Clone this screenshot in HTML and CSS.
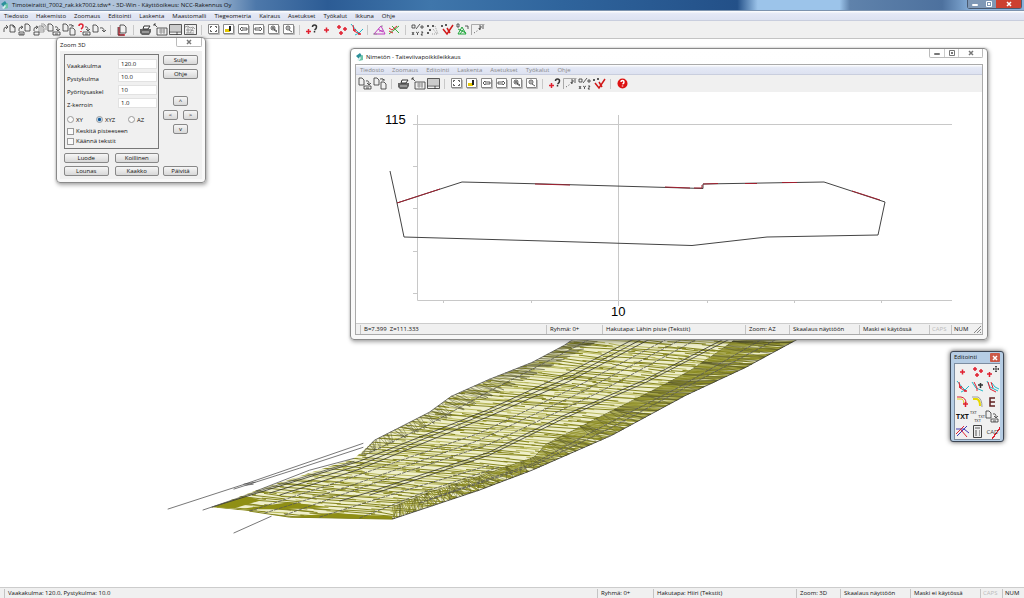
FILE: index.html
```
<!DOCTYPE html>
<html lang="fi">
<head>
    <meta charset="UTF-8">
    <meta name="viewport" content="width=device-width, initial-scale=1.0">
    <title>3D-Win</title>
    <link rel="stylesheet" href="styles.css">
</head>
<body>

    <!-- Icon library -->
    <svg class="icon-library" aria-hidden="true">
        <symbol id="i-open" viewBox="0 0 15 13"><path class="k" d="M2 9V6q0-2 3-2M4 2l2 2-2 2M8 2h3l2 2v5H8zM11 2v2h2"/></symbol>
        <symbol id="i-open-disk" viewBox="0 0 15 13"><path class="k" d="M2 8V6q0-2 3-2M4 3l2 1-2 2M8 1h3l2 2v5H8zM2 9h5v3H2z"/><path class="k" d="M3 11h3"/></symbol>
        <symbol id="i-open-many" viewBox="0 0 15 13"><path class="g" d="M7 3h3l2 2v4H7zM9 1h3l2 2v4M8 5h3M8 7h4M9 3h4"/><path class="k" d="M2 8V6q0-2 3-2M4 3l2 1-2 2M2 9h5v3H2z"/></symbol>
        <symbol id="i-save" viewBox="0 0 15 13"><path class="k" d="M1 1h3l2 2v5H1zM8 4q3-1 3 3M9 6l2 2 2-2"/><path class="k" d="M6 9h7v3H6zM8 11h3"/></symbol>
        <symbol id="i-save-as" viewBox="0 0 15 13"><path class="k" d="M1 1h3l2 2v5H1zM8 5h3l2 2v5H8zM7 2q3-1 4 1"/><path class="k" d="M9 3h3"/></symbol>
        <symbol id="i-ask-save" viewBox="0 0 15 13"><path class="r b" d="M2 3q0-2 2-2t2 2-2 3M4 8v1"/><path class="k" d="M8 4q3-1 3 3M9 6l2 2 2-2M6 9h7v3H6zM8 11h3"/></symbol>
        <symbol id="i-close" viewBox="0 0 15 13"><path class="k" d="M1 2h3l2 2v5H1zM8 5q4-1 4 3M10 7l2 2 2-2"/></symbol>
        <symbol id="i-book" viewBox="0 0 15 13"><path class="r b" d="M4 4v8h6"/><path class="k" d="M5 2h4l2 2v6H5zM3 4v8h6"/></symbol>
        <symbol id="i-print" viewBox="0 0 15 13"><path fill="#666" d="M2 6h11v3l-2 3H4l-2-2z"/><path fill="#fff" stroke="#333" d="M5 6l1-3h6l-2 3z"/><path stroke="#ccc" d="M4 9h7"/></symbol>
        <symbol id="i-export" viewBox="0 0 15 13"><path class="k" d="M1 1l3 3M1 3V1h2M4 5h10v7H4z"/><path class="g" d="M6 7h6M6 9h6M8 5v6M11 5v6"/></symbol>
        <symbol id="i-panel" viewBox="0 0 15 13"><path fill="#ccc" d="M2 2h11v6H2z"/><path class="k" d="M1.500 1.500h12v10h-12zM1 9h12M9 9v3"/></symbol>
        <symbol id="i-list" viewBox="0 0 15 13"><path class="k" d="M1.500 1.500h12v10h-12z"/><path class="g" d="M2 4l3-1 2 2 3-1 2 2M3 7h5l3 1M3 10h8M5 4v6M10 5l-3 5"/></symbol>
        <symbol id="i-frame" viewBox="0 0 15 13"><path fill="#fff" stroke="#888" d="M2.500 1.500h10v9h-10z"/><path stroke="#bbb" d="M3 11.500h10.500V3"/></symbol>
        <symbol id="i-fit" viewBox="0 0 15 13"><use href="#i-frame"/><path class="k" d="M4.500 5V3.500H6M9 3.500h1.500V5M4.500 7v1.500H6M9 8.500h1.500V7"/></symbol>
        <symbol id="i-paint" viewBox="0 0 15 13"><use href="#i-frame"/><path fill="#e5c800" d="M4 6h5v3H4z"/><path fill="#222" d="M8 3h2v5H8z"/></symbol>
        <symbol id="i-left" viewBox="0 0 15 13"><use href="#i-frame"/><path class="k" d="M4 6l2-2v1h5v2H6v1z"/></symbol>
        <symbol id="i-right" viewBox="0 0 15 13"><use href="#i-frame"/><path class="k" d="M11 6L9 4v1H4v2h5v1z"/></symbol>
        <symbol id="i-in" viewBox="0 0 15 13"><use href="#i-frame"/><circle cx="7" cy="5" r="2" class="k"/><path class="k" d="M8 7l3 2M8 6l3 2M6 5h2M7 4v2"/></symbol>
        <symbol id="i-out" viewBox="0 0 15 13"><use href="#i-frame"/><circle cx="7" cy="5" r="2" class="k"/><path class="k" d="M8 7l3 2M6 5h2"/></symbol>
        <symbol id="i-point-ask" viewBox="0 0 15 13"><path class="r b" d="M2 8.500h5M4.500 6v5"/><path class="k b" d="M8.500 4q0-2 2-2t2 2-2 3M10.500 8v1.500"/></symbol>
        <symbol id="i-point" viewBox="0 0 15 13"><path class="r b" d="M5 7h5M7.500 4.500v5"/></symbol>
        <symbol id="i-points" viewBox="0 0 15 13"><path class="r b" d="M3 4h4M5 2v4M9 6h4M11 4v4M5 10h4M7 8v4"/></symbol>
        <symbol id="i-line" viewBox="0 0 15 13"><path stroke="#22b8c8" d="M2 1l5 6 3 3 4-4M6 12l4-2"/><path class="r" d="M4 2l1 6 6 3"/><path class="r b" d="M4 7h3M9 11h3"/></symbol>
        <symbol id="i-angle" viewBox="0 0 15 13"><path stroke="#c03cc0" d="M2 11l7-8 4 8zM7 8h4M6 6l5 3"/><path class="g" d="M1 11h4M9 3h2"/></symbol>
        <symbol id="i-cross" viewBox="0 0 15 13"><path stroke="#3ab03a" d="M2 11l10-8M5 3l7 7"/><path class="r" d="M2 5l3 2 5-4M2 8l4 2"/></symbol>
        <symbol id="i-xyz" viewBox="0 0 15 13"><path class="k" d="M2 2h3v3H2zM6 6l4-5M10 4h4M12 2v4M2 9l2 3M4 9l-2 3M6 9l1.500 1L9 9M7.500 10v2M11 9h2l-2 3h2"/></symbol>
        <symbol id="i-marks" viewBox="0 0 15 13"><path class="k" d="M2 2l2 2M4 2L2 4M7 2l2 2M9 2L7 4M4 6l2 2M6 6L4 8M2 9l2 2M4 9l-2 2"/><path class="g" stroke-dasharray="1 1" d="M10 3l3 8M8 6l4 5M7 11h6"/></symbol>
        <symbol id="i-check" viewBox="0 0 15 13"><path class="k" d="M1 2l2 2M3 2L1 4M5 1l2 2M7 1L5 3"/><path stroke="#d01818" stroke-width="1.500" d="M3 6l4 5 6-9M7 5l3 5"/></symbol>
        <symbol id="i-hash" viewBox="0 0 15 13"><path class="k" d="M2 1h2v3H2zM10 3h3v3"/><path stroke="#20a83c" d="M3 11l4-7 4 7zM3 6l8 4M5 11l3-4"/></symbol>
        <symbol id="i-scale" viewBox="0 0 15 13"><path stroke="#aaa" d="M1.500 12V1.500h13"/><path class="k" stroke-dasharray="1 2" d="M4 10l6-4"/><path class="k" d="M9 3h2v2H9v1h2M13 2v4"/></symbol>
        <symbol id="i-help" viewBox="0 0 15 13"><circle cx="7.500" cy="6.500" r="5" fill="#dd1111"/><path stroke="#fff" stroke-width="1.500" d="M6 5q0-1.500 1.500-1.500T9 5 7.500 7M7.500 8.500v1"/></symbol>
        <symbol id="i-move" viewBox="0 0 15 13"><path class="r b" d="M2 9h5M4.500 7v5"/><path class="k" d="M8 4h6M11 1v6M10 2l1-1 1 1M10 6l1 1 1-1M9 3L8 4l1 1M13 3l1 1-1 1"/></symbol>
        <symbol id="i-line-move" viewBox="0 0 15 13"><path stroke="#22b8c8" d="M2 2l4 6 7 3"/><path class="r" d="M4 2l3 6v3"/><path class="k b" d="M8 5h5M10.500 3v5"/></symbol>
        <symbol id="i-line-copy" viewBox="0 0 15 13"><path stroke="#22b8c8" d="M2 1l3 6 8 4M7 3l3 4 4 2"/><path class="r" d="M3 2l2 7 6 3M6 2l2 6"/></symbol>
        <symbol id="i-arc-red" viewBox="0 0 15 13"><path stroke="#e0d020" d="M2 4h5q2 1 2 5"/><path class="r" d="M2 2h4q5 1 5 6"/><path class="r b" d="M8 9h5M10.500 7v5"/></symbol>
        <symbol id="i-arc-yellow" viewBox="0 0 15 13"><path stroke="#e8d800" stroke-width="2" d="M3 4h4q3 1 3 7"/><path class="g" d="M2 2h6q4 2 4 10"/></symbol>
        <symbol id="i-e" viewBox="0 0 15 13"><path stroke="#602020" stroke-width="1.500" d="M10 3H5v8h5M5 7h5"/></symbol>
        <symbol id="i-slice" viewBox="0 0 15 13"><path stroke="#4038b0" d="M1 4h8l5 4M2 11L12 1"/><path class="r" d="M1 9L9 1M6 5l6 7"/></symbol>
        <symbol id="i-calc" viewBox="0 0 15 13"><path stroke="#444" fill="#eee" d="M3.500 .500h8v12h-8z"/><path class="k" d="M5 3h5M5 6h2M9 6h1M5 8h2M9 8h1M5 10h2M9 10h1"/></symbol>
        <symbol id="i-app" viewBox="0 0 10 10"><path fill="#2b8f9a" d="M1 4l4-3 2 3-3 3z"/><path fill="#6dc5a8" d="M4 5l4-2v5l-4 1z"/><path fill="#d8eef0" d="M2 8l3-3 1 1-2 3z"/></symbol>
        <symbol id="i-x" viewBox="0 0 10 8"><path stroke="currentColor" stroke-width="1.500" d="M3 2l4 4M7 2L3 6"/></symbol>
        <symbol id="i-min" viewBox="0 0 10 8"><path stroke="currentColor" d="M2.500 4.500h5v1h-5z"/></symbol>
        <symbol id="i-max" viewBox="0 0 10 8"><path stroke="currentColor" d="M2.500 1.500h5v5h-5zM4 3.500h2M4 4.500h2"/></symbol>
    </svg>

    <header class="main-title">
        <svg class="app-icon"><use href="#i-app"/></svg>
        <span class="title-text">Timoteiraitti_7002_rak.kk7002.tdw* - 3D-Win - Käyttöoikeus: NCC-Rakennus Oy</span>
        <div class="main-controls">
            <button aria-label="Pienennä"><svg><use href="#i-min"/></svg></button>
            <button aria-label="Suurenna"><svg><use href="#i-max"/></svg></button>
            <button class="red" aria-label="Sulje"><svg><use href="#i-x"/></svg></button>
        </div>
    </header>

    <nav class="menu">
        <button>Tiedosto</button><button>Hakemisto</button><button>Zoomaus</button><button>Editointi</button><button>Laskenta</button><button>Maastomalli</button><button>Tiegeometria</button><button>Kairaus</button><button>Asetukset</button><button>Työkalut</button><button>Ikkuna</button><button>Ohje</button>
    </nav>

    <div class="toolbar" data-icons="open open-disk open-many save save-as ask-save close | book | print export panel list | fit paint left right in out | point-ask point points line | angle cross | xyz marks check hash scale"></div>

    <main class="workspace">
        <svg id="mesh" viewBox="0 38 1024 549" preserveAspectRatio="xMinYMin meet"></svg>
    </main>

    <footer class="status">
        <span class="cell grow">Vaakakulma: 120.0, Pystykulma: 10.0</span>
        <span class="cell group">Ryhmä: 0+</span>
        <span class="cell search">Hakutapa: Hiiri (Tekstit)</span>
        <span class="cell zoom">Zoom: 3D</span>
        <span class="cell scale">Skaalaus näyttöön</span>
        <span class="cell scale">Maski ei käytössä</span>
        <span class="cell key off">CAPS</span>
        <span class="cell key">NUM</span>
    </footer>

    <!-- Zoom 3D -->
    <section class="window zoom-dialog">
        <div class="window-title">
            <span class="title-text">Zoom 3D</span>
            <div class="controls"><button class="wide" aria-label="Sulje ikkuna"><svg><use href="#i-x"/></svg></button></div>
        </div>
        <form class="dialog-body">
            <div class="fields">
                <div class="field"><label for="vaaka">Vaakakulma</label><input type="text" id="vaaka" value="120.0"></div>
                <div class="field"><label for="pysty">Pystykulma</label><input type="text" id="pysty" value="10.0"></div>
                <div class="field"><label for="askel">Pyöritysaskel</label><input type="text" id="askel" value="10"></div>
                <div class="field"><label for="kerroin">Z-kerroin</label><input type="text" id="kerroin" value="1.0"></div>
                <div class="radios">
                    <label><input type="radio" name="taso">XY</label>
                    <label><input type="radio" name="taso" checked>XYZ</label>
                    <label><input type="radio" name="taso">AZ</label>
                </div>
                <label class="tick"><input type="checkbox">Keskitä pisteeseen</label>
                <label class="tick"><input type="checkbox">Käännä tekstit</label>
            </div>
            <div class="side">
                <button type="button">Sulje</button>
                <button type="button">Ohje</button>
                <div class="arrows">
                    <button type="button" class="up">^</button>
                    <button type="button" class="back">&lt;</button>
                    <button type="button" class="next">&gt;</button>
                    <button type="button" class="down">v</button>
                </div>
            </div>
            <div class="directions">
                <button type="button">Luode</button>
                <button type="button">Koillinen</button>
                <button type="button">Lounas</button>
                <button type="button">Kaakko</button>
            </div>
            <button type="button" class="update">Päivitä</button>
        </form>
    </section>

    <!-- Cross-section window -->
    <section class="window section-window">
        <div class="window-title">
            <svg class="app-icon"><use href="#i-app"/></svg>
            <span class="title-text">Nimetön - Taiteviivapoikkileikkaus</span>
            <div class="controls">
                <button aria-label="Pienennä"><svg><use href="#i-min"/></svg></button>
                <button aria-label="Suurenna"><svg><use href="#i-max"/></svg></button>
                <button class="wide" aria-label="Sulje ikkuna"><svg><use href="#i-x"/></svg></button>
            </div>
        </div>
        <div class="client">
            <nav class="menu inactive">
                <button>Tiedosto</button><button>Zoomaus</button><button>Editointi</button><button>Laskenta</button><button>Asetukset</button><button>Työkalut</button><button>Ohje</button>
            </nav>
            <div class="toolbar" data-icons="save save-as | print export panel | fit paint left right in out | point-ask scale xyz check | help"></div>
            <svg class="plot" viewBox="356 92 626 231">
                <path class="axis" d="M417.500 115V300.500H952M413 124.500H952M618.500 115V306M413 166.500h5M413 208.500h5M413 251.500h5M413 293.500h5M443.500 301v2M531.500 301v2M707.500 301v2M794.500 301v2M881.500 301v2"/>
                <path class="profile" d="M390 171L397 203L404 237L545 241L692 245.500L767 237L878 235L885 202L824 182L703 184V188.500L545 184L462 182L397 203"/>
                <path class="profile-red" d="M397 203L440 189M535 184l35 1M665 187l25 1M702 185v3l-8 0M703 184l15-.500M745 183.500l12 0M782 182.500l15 0M852 191l28 9"/>
                <text x="385" y="124">115</text>
                <text x="611" y="316">10</text>
            </svg>
            <div class="status">
                <span class="cell grow">B=7.399&nbsp; Z=111.333</span>
                <span class="cell group">Ryhmä: 0+</span>
                <span class="cell search">Hakutapa: Lähin piste (Tekstit)</span>
                <span class="cell zoom">Zoom: AZ</span>
                <span class="cell scale">Skaalaus näyttöön</span>
                <span class="cell scale">Maski ei käytössä</span>
                <span class="cell key off">CAPS</span>
                <span class="cell key">NUM</span>
                <svg class="grip" viewBox="0 0 9 10"><path d="M1 9l7-7M4 9l4-4M7 9l1-1" stroke="#888"/></svg>
            </div>
        </div>
    </section>

    <!-- Editing palette -->
    <section class="palette">
        <div class="palette-title">
            <span>Editointi</span>
            <button aria-label="Sulje paletti"><svg><use href="#i-x"/></svg></button>
        </div>
        <div class="palette-tools">
            <button aria-label="Piste"><svg><use href="#i-point"/></svg></button>
            <button aria-label="Pisteet"><svg><use href="#i-points"/></svg></button>
            <button aria-label="Siirrä"><svg><use href="#i-move"/></svg></button>
            <button aria-label="Viiva"><svg><use href="#i-line"/></svg></button>
            <button aria-label="Siirrä viiva"><svg><use href="#i-line-move"/></svg></button>
            <button aria-label="Kopioi viiva"><svg><use href="#i-line-copy"/></svg></button>
            <button aria-label="Kaari"><svg><use href="#i-arc-red"/></svg></button>
            <button aria-label="Pyöristys"><svg><use href="#i-arc-yellow"/></svg></button>
            <button aria-label="Ominaisuudet"><svg><use href="#i-e"/></svg></button>
            <button class="txt">TXT</button>
            <button class="txt-multi"><span>TXT</span><span>TXT</span><span>TXT</span></button>
            <button aria-label="Tallenna"><svg><use href="#i-save"/></svg></button>
            <button aria-label="Leikkaa"><svg><use href="#i-slice"/></svg></button>
            <button aria-label="Laskin"><svg><use href="#i-calc"/></svg></button>
            <button class="cad">CAD</button>
        </div>
    </section>

    <script src="script.js"></script>
</body>
</html>
```
FILE: styles.css
```
* {
    box-sizing: border-box;
}

body {
    margin: 0;
    min-height: 100vh;
    display: flex;
    flex-direction: column;
    position: relative;
    overflow: hidden;
    background-color: #fff;
    color: #111;
    font-family: "Open Sans", "Noto Sans", sans-serif;
    font-size: 6px;
    line-height: 8px;
}

button, input {
    margin: 0;
    padding: 0;
    border: 0;
    background: none;
    color: inherit;
    font: inherit;
}

button svg {
    display: block;
}

.icon-library {
    position: absolute;
    width: 0;
    height: 0;
}

/* Icon strokes */
symbol path:not([fill]) {
    fill: none;
}

.k { stroke: #333; stroke-width: 0.8; fill: none; }
.g { stroke: #888; stroke-width: 0.8; }
.r { stroke: #e02030; }
.b { stroke-width: 1.5; }

.app-icon {
    width: 10px;
    height: 10px;
    flex: none;
}

/* Main title bar */
.main-title {
    height: 11px;
    display: flex;
    align-items: center;
    gap: 2px;
    background: linear-gradient(90deg, #9db9d6 0, #b2c4da 10%, #9db5d0 21%, #4d78aa 25%, #2c5c95 32%, #3f76ab 42%, #2f649c 55%, #235088 72%, #9cc4ea 74%, #9cc4ea 82%, #5f82ab 83%, #4d719e 92%, #8ab2dc 95%);
    border-bottom: 1px solid #7d93ae;
}

.main-controls {
    display: flex;
    align-self: flex-start;
    margin-left: auto;
    margin-right: 2px;
    color: #fff;
    border: 1px solid #4a5a70;
    border-top: 0;
    border-radius: 0 0 3px 3px;
}

.main-controls button {
    width: 14px;
    height: 8px;
    background-color: #7f98b6;
}

.main-controls button.red {
    width: 25px;
    background-color: #cc4030;
}

.main-controls svg, .controls svg {
    width: 10px;
    height: 8px;
    margin: 0 auto;
}

/* Menus and toolbars */
.menu {
    height: 10px;
    display: flex;
    background: linear-gradient(#fff, #e4e8f5 30%, #dde2f1);
    border-bottom: 1px solid #c9cede;
}

.menu button {
    padding: 0 4px;
}

.menu.inactive {
    color: #888;
}

.toolbar {
    height: 17px;
    display: flex;
    align-items: center;
    padding-left: 2px;
    background-color: #f0f0f0;
}

.toolbar button, .toolbar button svg {
    width: 15px;
    height: 13px;
}

.toolbar .sep {
    width: 1px;
    height: 10px;
    margin: 0 4px 0 3px;
    background-color: #c8c8c8;
}

.workspace {
    flex: 1;
    display: flex;
    border-top: 1px solid #c4c4c4;
}

#mesh {
    flex: 1;
    min-width: 0;
    height: 548px;
}

/* Status bars */
.status {
    height: 11px;
    display: flex;
    background-color: #f0f0f0;
    border-top: 1px solid #ccc;
    white-space: nowrap;
}

.cell {
    flex: none;
    margin-top: 1px;
    padding-left: 3px;
    border-left: 1px solid #c4c4c4;
}

.cell.grow {
    flex: 1;
    min-width: 0;
    margin-left: 4px;
}

.cell.group { width: 56px; }
.cell.search { width: 143px; }
.cell.zoom { width: 44px; }
.cell.scale { width: 70px; }
.cell.key { width: 22px; padding-left: 2px; }
.cell.off { color: #bbb; }

.grip {
    width: 9px;
    height: 10px;
}

/* Floating windows */
.window {
    position: absolute;
    border: 1px solid #8a8a8a;
    border-radius: 4px;
    background: linear-gradient(#fff, #f8f8f8);
    box-shadow: 0 0 2px #aaa, 1px 2px 4px rgba(0, 0, 0, 0.35);
}

.window-title {
    display: flex;
    align-items: center;
    gap: 1px;
}

.controls {
    display: flex;
    align-self: flex-start;
    margin-left: auto;
    color: #777;
    border: 1px solid #bbb;
    border-top: 0;
    border-radius: 0 0 2px 2px;
}

.controls button {
    width: 14px;
    height: 8px;
}

.controls button + button {
    border-left: 1px solid #ccc;
}

.controls button.wide {
    width: 24px;
}

.section-window {
    left: 350px;
    top: 48px;
    width: 638px;
    padding: 0 4px 4px;
}

.section-window .window-title {
    height: 15px;
}

.client {
    border: 1px solid #aaa;
    background-color: #fff;
}

.section-window .menu {
    height: 10px;
}

.plot {
    display: block;
    width: 100%;
}

.plot path {
    fill: none;
}

.plot text {
    font: 13px "Liberation Sans", sans-serif;
}

.axis { stroke: #c8c8c8; }
.profile { stroke: #444; }
.profile-red { stroke: #a02030; }

/* Zoom 3D dialog */
.zoom-dialog {
    left: 56px;
    top: 37px;
    width: 150px;
    padding: 0 3px 3px;
}

.zoom-dialog .window-title {
    height: 13px;
}

.dialog-body {
    display: grid;
    grid-template-columns: 95px 35px;
    gap: 4px;
    padding: 3px 4px 3px;
    background-color: #f0f0f0;
}

.fields {
    height: 95px;
    padding: 4px 1px 0 2px;
    border: 1px solid #777;
}

.field {
    display: flex;
    align-items: center;
    justify-content: space-between;
    height: 10px;
    margin-bottom: 3px;
}

.field label {
    padding-top: 4px;
}

.field input {
    width: 39px;
    height: 10px;
    padding-left: 2px;
    background-color: #fff;
    border: 1px solid #e2e2e2;
}

.radios {
    display: grid;
    grid-template-columns: 29px 32px 1fr;
    height: 13px;
    align-items: center;
    margin-top: 5px;
}

.radios label, .tick {
    display: flex;
    align-items: center;
    gap: 2px;
}

.tick {
    height: 10px;
}

.radios input, .tick input {
    appearance: none;
    flex: none;
    width: 7px;
    height: 7px;
    border: 1px solid #999;
    background-color: #fafafa;
}

.radios input {
    border-radius: 50%;
}

.radios input:checked {
    background: radial-gradient(#155a96 35%, #cfe3f5 60%);
}

.side {
    display: flex;
    flex-direction: column;
    gap: 4px;
    padding-top: 1px;
}

.dialog-body button {
    height: 10px;
    line-height: 8px;
    border: 1px solid #888;
    border-radius: 2px;
    background: linear-gradient(#f6f6f6, #d8d8d8);
}

.arrows {
    display: grid;
    grid-template-columns: 15px 15px;
    gap: 4px 5px;
    margin-top: 13px;
}

.arrows .up, .arrows .down {
    grid-column: 1 / 3;
    justify-self: center;
    width: 15px;
}

.directions {
    display: grid;
    grid-template-columns: 1fr 1fr;
    gap: 3px 6px;
}

.update {
    align-self: end;
}

/* Editing palette */
.palette {
    position: absolute;
    left: 950px;
    top: 351px;
    width: 54px;
    padding: 1px 3px;
    border: 1px solid #3c4654;
    border-radius: 3px;
    background-color: #b6cde4;
    box-shadow: 0 0 5px rgba(0, 0, 0, 0.7);
}

.palette-title {
    display: flex;
    justify-content: space-between;
    height: 10px;
}

.palette-title button {
    width: 10px;
    height: 9px;
    color: #fff;
    border-radius: 1px;
    background-color: #cc5a48;
}

.palette-title svg {
    width: 10px;
    height: 8px;
}

.palette-tools {
    display: grid;
    grid-template-columns: repeat(3, 15px);
    grid-auto-rows: 15px;
    background-color: #f0f0f0;
    border: 1px solid #7d8da0;
    border-right: 0;
}

.palette-tools button {
    height: 15px;
}

.palette-tools svg {
    width: 15px;
    height: 13px;
}

.palette-tools .txt {
    font-size: 7px;
    font-weight: bold;
}

.txt-multi {
    display: grid;
    align-content: center;
    font-size: 4px;
    line-height: 4px;
}

.palette-tools .txt-multi {
    font-size: 4px;
    line-height: 4px;
}

.txt-multi span:nth-child(1) {
    text-align: left;
}

.txt-multi span:nth-child(2) {
    text-align: right;
}

.palette-tools .cad {
    font-size: 6px;
    color: #444;
    background: linear-gradient(125deg, transparent 66%, #e02030 66%, #e02030 72%, transparent 72%);
}

/* Terrain model */
.ground { fill: #efefcb; }
.hatch { fill: none; stroke: #85851c; }
.hatch-light { fill: none; stroke: #b9b95c; }
.slope { fill: none; stroke: #8c8c24; stroke-width: 0.7; }
.wire { fill: none; stroke: #4c4c2a; stroke-width: 0.7; opacity: 0.6; }
.near { fill: #8f8f14; }
.edge { fill: none; stroke: #333; stroke-width: 0.8; }
.dotted { fill: none; stroke: #555; stroke-width: 0.8; stroke-dasharray: 4 1; }
.outline { fill: none; stroke: #555; stroke-width: 0.8; }
```
FILE: script.js
```
// Toolbars
document.querySelectorAll('.toolbar').forEach(bar => {
    bar.innerHTML = bar.dataset.icons.split(' ').map(name =>
        name === '|'
            ? '<span class="sep"></span>'
            : `<button aria-label="${name}"><svg><use href="#i-${name}"/></svg></button>`
    ).join('');
});

// Break lines of the road model, nearest end first
const leftEdge = [[212, 507], [257, 490], [355, 458], [362, 452], [375, 440], [430, 412], [452, 396], [490, 379], [533, 362], [565, 345], [580, 335]];
const leftToe = [[358, 458], [410, 436], [490, 397], [560, 362], [610, 335]];
const leftTop = [[362, 454], [375, 440], [430, 412], [452, 396], [490, 379], [533, 362], [565, 345], [580, 335]];
const crest = [[393, 507], [427, 493], [480, 476], [535, 457], [547, 444], [600, 417], [660, 387], [690, 371], [720, 351], [742, 335]];
const toe = [[393, 519], [480, 490], [533, 470], [613, 435], [687, 395], [747, 367], [806, 335]];
const front = [[250, 511], [290, 517], [393, 519]];

let seed = 7;
function rnd() {
    seed = (seed * 16807) % 2147483647;
    return seed / 2147483647;
}

function at(line, t) {
    const lengths = line.slice(1).map((p, i) => Math.hypot(p[0] - line[i][0], p[1] - line[i][1]));
    let d = t * lengths.reduce((a, b) => a + b, 0);
    let i = 0;
    while (i < lengths.length - 1 && d > lengths[i]) {
        d -= lengths[i];
        i++;
    }
    const k = d / lengths[i];
    return [line[i][0] + (line[i + 1][0] - line[i][0]) * k, line[i][1] + (line[i + 1][1] - line[i][1]) * k];
}

function toPath(points) {
    return 'M' + points.map(p => p.map(n => n.toFixed(1)).join(' ')).join('L');
}

// Triangle strip between two break lines, with uneven spacing
function strip(a, b, count) {
    const points = [];
    for (let i = 0; i <= count; i++) {
        points.push(at(a, i / count), at(b, Math.min(1, (i + rnd() * 3) / count)));
    }
    return toPath(points);
}

// Cross-sections over the road surface, split into facets
let dark = '';
let light = '';
for (let y = 320; y < 550; y += 2.6) {
    let x = 200 + rnd() * 20;
    while (x < 810) {
        const length = 16 + rnd() * 34;
        const y0 = y + (x - 200) * 0.07 - 30 + rnd() * 2.4;
        const piece = `M${x.toFixed(1)} ${y0.toFixed(1)}l${length.toFixed(1)} ${(length * 0.05 + rnd() * 2.5).toFixed(1)}`;
        if (rnd() < (y0 > 480 ? 0.85 : 0.6)) {
            dark += piece;
        } else {
            light += piece;
        }
        x += length - 4;
    }
}

const body = [...leftEdge, ...toe.slice().reverse(), ...front.slice(0, 2).reverse()];
const dark3d = [
    [[212, 507], [280, 486], [360, 461], [490, 409], [570, 372], [642, 335]],
    [[270, 493], [360, 465], [490, 412], [570, 377], [650, 335]],
    [[280, 495], [360, 469], [490, 416], [570, 381], [658, 335]],
    [[340, 501], [370, 492], [490, 452], [563, 416], [647, 379], [732, 335]],
    [[370, 495], [490, 455], [563, 419], [647, 382], [738, 335]]
];
const dotted3d = [
    [[250, 511], [350, 478], [480, 433], [580, 385], [675, 335]],
    [[265, 513], [350, 486], [480, 440], [580, 393], [690, 335]],
    [[285, 515], [400, 474], [490, 444], [600, 392], [705, 335]],
    [[320, 517], [400, 492], [490, 465]],
    [[360, 518], [430, 490], [500, 467]],
    [[365, 455], [430, 424], [490, 391], [560, 355], [598, 335]],
    [[430, 499], [535, 463], [600, 428], [680, 387], [770, 335]],
    [[420, 503], [535, 465], [613, 427], [700, 380], [785, 335]]
];
const lines = [
    [[168, 509], [245, 484], [364, 443]],
    [[234, 489], [300, 468], [364, 447]],
    [[203, 510], [262, 490], [355, 461]],
    [[234, 533], [272, 516]],
    [[244, 484], [256, 482]],
    [[246, 485], [254, 484]],
    [[256, 491], [310, 470], [355, 458]]
];

const draw = (cls, d, extra = '') => `<path class="${cls}" d="${d}" ${extra}/>`;
document.getElementById('mesh').innerHTML =
    `<clipPath id="road">${draw('', toPath(body) + 'Z')}</clipPath>` +
    draw('ground', toPath(body) + 'Z') +
    draw('hatch-light', light, 'clip-path="url(#road)"') +
    draw('hatch', dark, 'clip-path="url(#road)"') +
    draw('near', 'M212 507L245 496L262 500L235 508ZM240 509L290 502L330 507L282 509ZM290 517L330 513L393 516L393 519Z') +
    draw('slope', strip(crest, toe, 150)) +
    draw('wire', strip(toe, crest, 60)) +
    draw('wire', strip(leftTop, leftToe, 60)) +
    draw('hatch', toPath(front)) +
    draw('edge', toPath(toe)) +
    draw('wire', toPath(crest)) +
    draw('outline', toPath(leftTop)) +
    dark3d.map(l => draw('edge', toPath(l))).join('') +
    dotted3d.map(l => draw('dotted', toPath(l))).join('') +
    lines.map(l => draw('outline', toPath(l))).join('');
```
